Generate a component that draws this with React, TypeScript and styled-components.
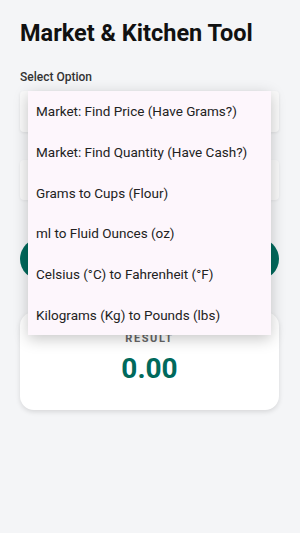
import React, { FC, useState } from 'react'
import styled, { createGlobalStyle } from 'styled-components'

const options = [
  'Market: Find Price (Have Grams?)',
  'Market: Find Quantity (Have Cash?)',
  'Grams to Cups (Flour)',
  'ml to Fluid Ounces (oz)',
  'Celsius (°C) to Fahrenheit (°F)',
  'Kilograms (Kg) to Pounds (lbs)',
]

const App: FC = () => {
  const [selected, setSelected] = useState(0)
  const [open, setOpen] = useState(true)

  return (
    <Page>
      <GlobalStyle />
      <Title>Market &amp; Kitchen Tool</Title>
      <Label>Select Option</Label>
      <SelectWrap>
        <SelectBox onClick={() => setOpen(!open)}>
          {open ? '' : options[selected]}
        </SelectBox>
        {open && (
          <Menu>
            {options.map((opt, index) => (
              <MenuItem
                key={'opt-' + index}
                onClick={() => {
                  setSelected(index)
                  setOpen(false)
                }}
              >
                {opt}
              </MenuItem>
            ))}
          </Menu>
        )}
      </SelectWrap>
      <Input placeholder="" />
      <Button>Calculate</Button>
      <ResultCard>
        <ResultLabel>RESULT</ResultLabel>
        <ResultValue>0.00</ResultValue>
      </ResultCard>
    </Page>
  )
}

export default App

const GlobalStyle = createGlobalStyle`
  body {
    margin: 0;
    background: #f4f5f7;
    font-family: Roboto, 'Liberation Sans', sans-serif;
  }
`

const Page = styled.div`
  display: flex;
  flex-direction: column;
  padding: 19px 21px 20px 20px;
  min-height: 533px;
  box-sizing: border-box;
`

const Title = styled.h1`
  margin: 0;
  font-size: 23.5px;
  line-height: 28px;
  font-weight: 700;
  color: #111;
`

const Label = styled.div`
  margin-top: 23px;
  font-size: 12px;
  line-height: 14px;
  font-weight: 500;
  color: #333;
`

const SelectWrap = styled.div`
  position: relative;
  margin-top: 7px;
`

const SelectBox = styled.div`
  height: 41px;
  background: #fafafa;
  border-radius: 4px;
  box-shadow: 0 1px 3px rgba(0, 0, 0, 0.08);
  padding: 0 12px;
  display: flex;
  align-items: center;
  font-size: 13px;
  color: #222;
`

const Menu = styled.ul`
  position: absolute;
  top: 0;
  left: 8px;
  width: 243px;
  margin: 0;
  padding: 0;
  list-style: none;
  background: #fdf6fc;
  box-shadow: 0 4px 14px rgba(0, 0, 0, 0.22);
  z-index: 10;
`

const MenuItem = styled.li`
  height: 40.67px;
  display: flex;
  align-items: center;
  padding-left: 8px;
  font-size: 13.5px;
  color: #222;
  cursor: pointer;
`

const Input = styled.input`
  margin-top: 28px;
  height: 40px;
  box-sizing: border-box;
  border: none;
  border-radius: 4px;
  background: #f9f9f9;
  box-shadow: 0 1px 3px rgba(0, 0, 0, 0.06);
`

const Button = styled.button`
  margin-top: 38px;
  height: 42px;
  border: none;
  border-radius: 21px;
  background: #00695c;
  color: #fff;
  font-family: Roboto, 'Liberation Sans', sans-serif;
  font-size: 14px;
  font-weight: 700;
`

const ResultCard = styled.div`
  margin-top: 32px;
  height: 98px;
  background: #fff;
  border-radius: 14px;
  box-shadow: 0 2px 5px rgba(0, 0, 0, 0.12);
  display: flex;
  flex-direction: column;
  align-items: center;
  padding-top: 20px;
  box-sizing: border-box;
`

const ResultLabel = styled.div`
  font-size: 11px;
  line-height: 14px;
  font-weight: 700;
  letter-spacing: 1.6px;
  color: #666;
`

const ResultValue = styled.div`
  margin-top: 6px;
  font-size: 28px;
  line-height: 34px;
  font-weight: 700;
  color: #00695c;
`
